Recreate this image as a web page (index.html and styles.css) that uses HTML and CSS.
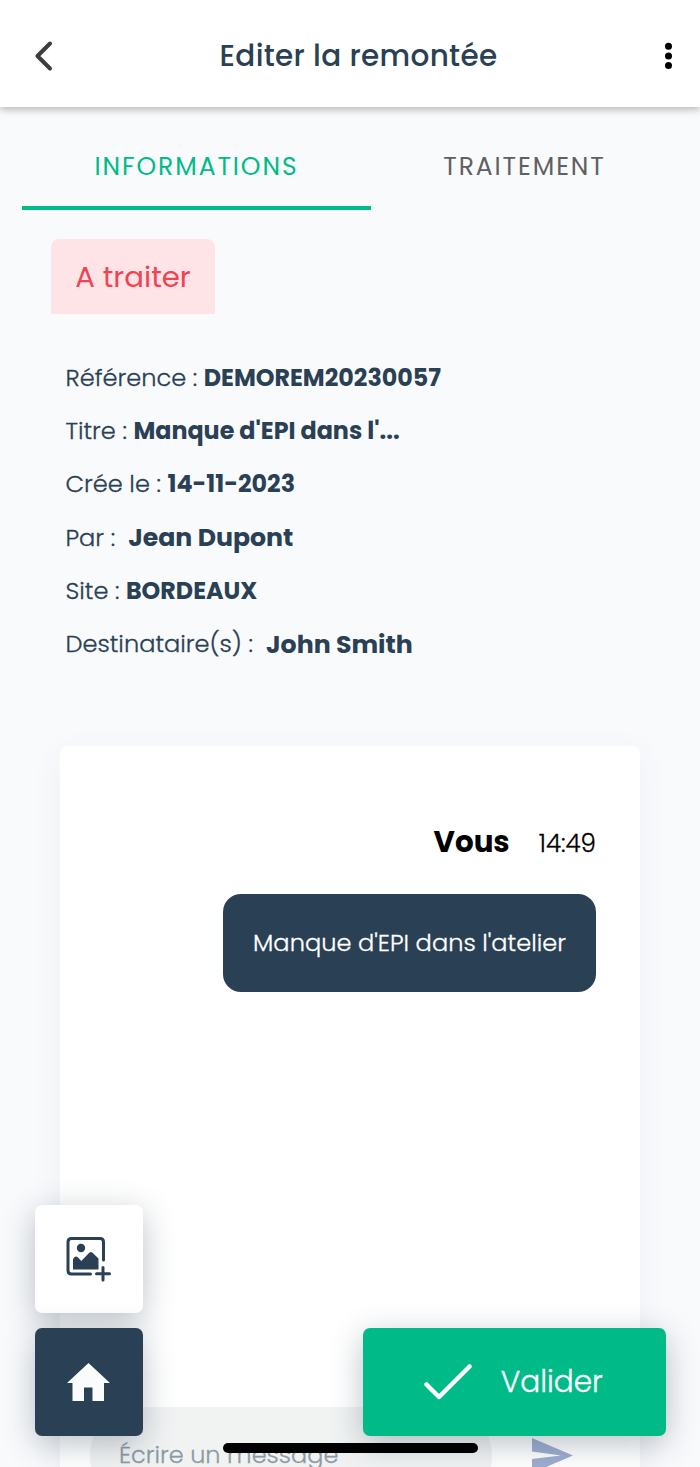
FILE: index.html
```html
<!DOCTYPE html>
<html lang="fr">
<head>
    <meta charset="UTF-8">
    <meta name="viewport" content="width=device-width, initial-scale=1.0">
    <title>Editer la remontée</title>
    <link rel="stylesheet" href="styles.css">
</head>
<body>
<div class="screen">
    <header class="header">
        <svg class="back" width="20" height="32" viewBox="0 0 20 32">
            <path d="M17 3.5 L4.500 16 L17 28.500" fill="none" stroke="#3d3d3d" stroke-width="4" stroke-linecap="round" stroke-linejoin="round"/>
        </svg>
        <h1>Editer la remontée</h1>
        <svg class="more" width="8" height="28" viewBox="0 0 8 28">
            <circle cx="4.5" cy="4.3" r="3.500"/>
            <circle cx="4.5" cy="14" r="3.500"/>
            <circle cx="4.5" cy="23.500" r="3.500"/>
        </svg>
    </header>

    <nav class="tabs">
        <div class="tab active"><span>INFORMATIONS</span></div>
        <div class="tab"><span>TRAITEMENT</span></div>
    </nav>

    <main class="content">
        <div class="badge"><span>A traiter</span></div>

        <div class="infos">
            <div class="row"><span>Référence :</span><b>DEMOREM20230057</b></div>
            <div class="row"><span>Titre :</span><b>Manque d'EPI dans l'...</b></div>
            <div class="row"><span>Crée le :</span><b>14-11-2023</b></div>
            <div class="row person"><span>Par :</span><b>Jean Dupont</b></div>
            <div class="row"><span>Site :</span><b>BORDEAUX</b></div>
            <div class="row person"><span>Destinataire(s) :</span><b>John Smith</b></div>
        </div>

        <section class="chat">
            <div class="meta"><b class="author">Vous</b><span class="hour">14:49</span></div>
            <div class="bubble"><span>Manque d'EPI dans l'atelier</span></div>
            <div class="compose">
                <div class="field"><span>Écrire un message</span></div>
                <svg class="send" width="41" height="36" viewBox="0 0 41 36">
                    <path d="M0 0 L41 17.500 L0 35 V21 L29 17.500 L0 13.500 Z" fill="#9dadd0"/>
                </svg>
            </div>
        </section>
    </main>

    <!-- Boutons flottants -->
    <div class="floating">
        <div class="left">
            <button class="square photo">
                <svg width="46" height="46" viewBox="0 0 46 46">
                    <path d="M37.500 24 V6 Q37.500 2.500 34 2.500 H5.500 Q2 2.500 2 6 V34.500 Q2 38 5.500 38 H24.500" fill="none" stroke="#2a4054" stroke-width="3" stroke-linecap="round"/>
                    <circle cx="15" cy="12" r="4.200" fill="#2a4054"/>
                    <path d="M7 33.500 V23 L9 20.700 Q10.500 20 11.800 21.300 L15.300 25 L23.500 16.500 Q25 15.500 26.500 16.800 L32.500 22.500 V33.500 Z" fill="#2a4054"/>
                    <path d="M37 31.500 V44 M30.500 37.800 H43.500" fill="none" stroke="#2a4054" stroke-width="3" stroke-linecap="round"/>
                </svg>
            </button>
            <button class="square home">
                <svg width="43" height="38" viewBox="0 0 43 38">
                    <path d="M21.500 0 L43 20 H37 V38 H25.500 V24.500 H17 V38 H5.500 V20 H0 Z" fill="#fafbfd"/>
                </svg>
            </button>
        </div>
        <button class="validate">
            <svg width="48" height="36" viewBox="0 0 48 36">
                <path d="M2.500 20.500 L15 33 L45.500 2.500" fill="none" stroke="#fff" stroke-width="4.500" stroke-linecap="round" stroke-linejoin="round"/>
            </svg>
            <span>Valider</span>
        </button>
    </div>
    <div class="indicator"></div>
</div>
</body>
</html>
```

FILE: styles.css
```css
* {
    box-sizing: border-box;
}

body {
    margin: 0;
    font-family: Poppins, Inter, 'Open Sans', sans-serif;
    background: #f9fafc;
    color: #2a4054;
}

span, b {
    white-space: nowrap;
}

svg {
    display: block;
    flex: none;
}

.screen {
    position: relative;
    width: 700px;
    height: 1467px;
    overflow: hidden;
}

/* En-tête */
.header {
    display: flex;
    align-items: center;
    justify-content: space-between;
    height: 107px;
    padding: 5px 28px 0 33px;
    background: #fff;
    box-shadow: 0 3px 7px rgba(0, 0, 0, 0.25);
}

h1 {
    margin: 0;
    padding-bottom: 1px;
    font-size: 29.5px;
    font-weight: 500;
    letter-spacing: 0.3px;
}

/* Onglets */
.tabs {
    display: flex;
    padding: 0 0 0 22px;
}

.tab {
    display: flex;
    justify-content: center;
    width: 349px;
    height: 103px;
    padding-top: 45px;
    font-size: 25px;
    line-height: 30px;
    letter-spacing: 1.9px;
    color: #5f6062;
}

.tab + .tab {
    width: 307px;
}

.tab.active {
    color: #00bb87;
    border-bottom: 4px solid #00bb87;
}

.content {
    padding: 29px 60px 0 51px;
}

.badge {
    display: flex;
    justify-content: center;
    width: 164px;
    height: 75px;
    padding-top: 20px;
    border-radius: 8px 8px 0 0;
    background: #ffe4e7;
    color: #ef4452;
    font-size: 29.2px;
    line-height: 36px;
}

/* Informations */
.infos {
    padding: 36.5px 0 0 14.5px;
}

.row {
    display: flex;
    gap: 6.5px;
    height: 53.3px;
    align-items: center;
    font-size: 24.1px;
    font-weight: 300;
}

.row span, .hour, .bubble, .field, .validate {
    -webkit-text-stroke: 0.3px;
}

.row b {
    font-size: 23.8px;
    font-weight: 700;
}

.person {
    gap: 13px;
}

.row.person b {
    padding-top: 2px;
    font-size: 25.2px;
}

/* Discussion */
.chat {
    display: flex;
    flex-direction: column;
    align-items: flex-end;
    margin: 75.5px 0 0 9px;
    height: 800px;
    padding: 78px 44px 0 30px;
    border-radius: 8px;
    background: #fff;
    box-shadow: 0 8px 32px rgba(60, 80, 140, 0.06);
}

.meta {
    display: flex;
    align-items: baseline;
    gap: 29px;
    height: 70px;
    color: #000;
}

.author {
    font-size: 29.3px;
    line-height: 36px;
}

.hour {
    font-size: 24.6px;
    font-weight: 300;
}

.bubble {
    display: flex;
    align-items: center;
    justify-content: center;
    width: 373px;
    height: 98px;
    border-radius: 18px;
    background: #2a4054;
    color: #fff;
    font-size: 24.1px;
    font-weight: 300;
}

.compose {
    display: flex;
    align-self: stretch;
    margin-top: 415px;
    gap: 40px;
}

.field {
    flex: none;
    width: 402px;
    height: 97px;
    padding: 33px 0 0 29px;
    border-radius: 48px;
    background: #f1f3f3;
    color: #8d9aa5;
    font-size: 24px;
    line-height: 30px;
    font-weight: 300;
}

.send {
    margin-top: 31px;
}

/* Boutons flottants */
.floating {
    position: absolute;
    left: 34.5px;
    right: 34.5px;
    bottom: 31px;
    display: flex;
    justify-content: space-between;
    align-items: flex-end;
}

.left {
    display: flex;
    flex-direction: column;
    gap: 14.5px;
}

button {
    display: flex;
    align-items: center;
    justify-content: center;
    border: 0;
    padding: 0;
    font-family: inherit;
    border-radius: 7px;
    box-shadow: 0 8px 32px rgba(42, 64, 84, 0.32);
}

.square {
    width: 108.5px;
    height: 108.5px;
}

.photo {
    background: #fff;
}

.home {
    background: #2a4054;
}

.validate {
    width: 302.5px;
    height: 108.5px;
    padding-right: 2px;
    gap: 29px;
    background: #00bb87;
    color: #fff;
    font-size: 29.6px;
    font-weight: 300;
}

/* Barre système */
.indicator {
    position: absolute;
    left: 223px;
    bottom: 14px;
    width: 255px;
    height: 10px;
    border-radius: 5px;
    background: #000;
}
```
